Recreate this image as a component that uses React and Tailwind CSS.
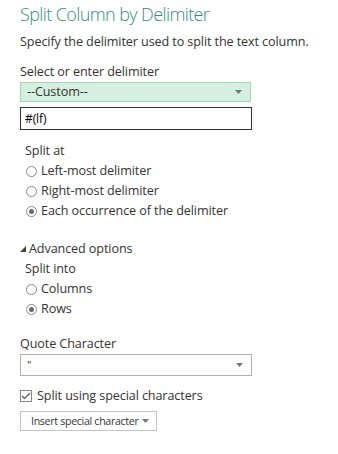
const Radio = ({ checked, label }) => (
  <div className="flex items-center h-5 pl-[6px]">
    <span className="w-[11px] h-[11px] rounded-full border border-[#8a8a8a] bg-white flex items-center justify-center">
      {checked && <span className="w-[5px] h-[5px] rounded-full bg-[#6a6a6a]" />}
    </span>
    <span className="ml-[4px]">{label}</span>
  </div>
);

const Caret = () => (
  <svg width="7" height="4" viewBox="0 0 7 4" className="block shrink-0">
    <path d="M0 0h7L3.5 4z" fill="#777" />
  </svg>
);

export default function App() {
  return (
    <div
      className="w-[338px] h-[454px] bg-white text-[#333] text-[12.6px] leading-5 pl-5 tracking-[-0.1px]"
      style={{ fontFamily: '"Open Sans", "Noto Sans", sans-serif' }}
    >
      <h1 className="text-[18px] font-light text-[#2f8f83] leading-7 tracking-[-0.6px]">
        Split Column by Delimiter
      </h1>
      <p className="mt-[4px]">Specify the delimiter used to split the text column.</p>

      <div className="mt-[10px]">Select or enter delimiter</div>
      <div className="w-[231px] h-[20px] bg-[#d5efe0] border border-[#9fd6b8] flex items-center justify-between pl-[6px] pr-[8px]">
        <span>--Custom--</span>
        <Caret />
      </div>
      <div className="mt-[5px] w-[232px] h-[23px] border border-[#333] flex items-center pl-[4px] text-[12px] text-black">#(lf)</div>

      <div className="mt-[11px] pl-[5px]">Split at</div>
      <Radio label="Left-most delimiter" />
      <Radio label="Right-most delimiter" />
      <Radio checked label="Each occurrence of the delimiter" />

      <div className="mt-[18px] flex items-center">
        <svg width="6" height="6" viewBox="0 0 6 6" className="mr-[3px]">
          <path d="M6 0v6H0z" fill="#444" />
        </svg>
        <span>Advanced options</span>
      </div>
      <div className="pl-[5px]">Split into</div>
      <Radio label="Columns" />
      <Radio checked label="Rows" />

      <div className="mt-[15px]">Quote Character</div>
      <div className="w-[232px] h-[22px] border border-[#b0b0b0] flex items-center justify-between pl-[6px] pr-[8px]">
        <span className="text-[11px]">"</span>
        <Caret />
      </div>

      <div className="mt-[10px] flex items-center">
        <span className="w-[12px] h-[12px] border border-[#8a8a8a] flex items-center justify-center">
          <svg width="10" height="8" viewBox="0 0 10 8">
            <path d="M1 4l2.5 2.5L9 1" fill="none" stroke="#555" strokeWidth="1.2" />
          </svg>
        </span>
        <span className="ml-[5px]">Split using special characters</span>
      </div>

      <div className="mt-[5px] w-[137px] h-[20px] border border-[#c4c4c4] flex items-center pl-[10px] pr-[7px] text-[10.6px] tracking-[-0.3px] justify-between whitespace-nowrap">
        <span>Insert special character</span>
        <Caret />
      </div>
    </div>
  );
}
